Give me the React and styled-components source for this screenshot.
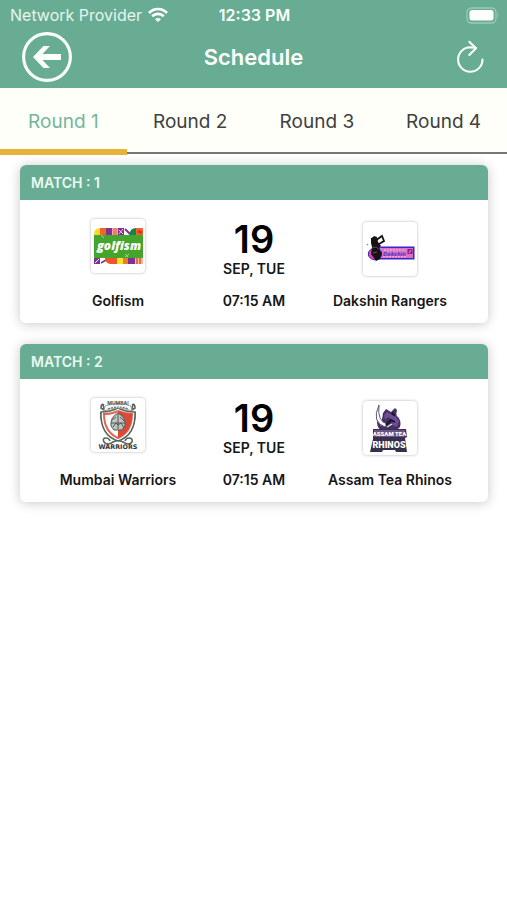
import React, { useState } from "react";
import styled, { createGlobalStyle } from "styled-components";

const green = "#68ad93";

const GlobalStyle = createGlobalStyle`
  * { box-sizing: border-box; }
  body {
    margin: 0;
    background: #fff;
    color: #161616;
    font-family: Inter, "Liberation Sans", sans-serif;
  }
  button { font: inherit; border: 0; padding: 0; background: none; cursor: pointer; }
`;

const Page = styled.div`
  min-height: 100vh;
  background: #fff;
`;

const Header = styled.header`
  background: ${green};
  color: #fbfffc;
`;

const StatusBar = styled.div`
  display: grid;
  grid-template-columns: 1fr auto 1fr;
  align-items: center;
  height: 30px;
  padding: 0 8px 0 10px;
  font-size: 16px;
  line-height: 20px;
  white-space: nowrap;
`;

const Carrier = styled.div`
  display: flex;
  align-items: center;
  gap: 6px;
  color: #e6f5ed;
`;

const Clock = styled.time`
  font-weight: 600;
`;

const BatterySlot = styled.div`
  display: flex;
  justify-content: flex-end;
`;

const TitleBar = styled.div`
  display: grid;
  grid-template-columns: 1fr auto 1fr;
  align-items: center;
  height: 58px;
  padding: 0 22px 4px;
`;

const Title = styled.h1`
  margin: 0;
  font-size: 22px;
  line-height: 28px;
  font-weight: 600;
`;

const IconButton = styled.button`
  display: flex;
  color: inherit;
  justify-self: ${(p) => p.$side};
`;

const Icon = styled.svg`
  display: block;
  flex: none;
`;

const Tabs = styled.div`
  display: grid;
  grid-template-columns: repeat(4, 1fr);
  background: #fdfff8;
`;

const Tab = styled.button`
  height: 67px;
  font-size: 19px;
  line-height: 24px;
  color: ${(p) => (p.$active ? "#74b69c" : "#404040")};
  box-shadow: ${(p) => (p.$active ? "inset 0 -6px #e8b437" : "inset 0 -1px #fff, inset 0 -3px #777")};
`;

const MatchList = styled.main`
  display: grid;
  gap: 21px;
  padding: 10px 19px 24px 20px;
`;

const Card = styled.article`
  overflow: hidden;
  border-radius: 6px;
  background: #fff;
  box-shadow: 0 1px 12px rgba(0, 0, 0, 0.22);
`;

const CardHeading = styled.h2`
  margin: 0;
  padding: 8px 11px 7px;
  background: ${green};
  color: #eafaf2;
  font-size: 14px;
  line-height: 20px;
  font-weight: 600;
`;

const CardBody = styled.div`
  display: grid;
  grid-template-columns: repeat(3, 1fr);
  align-items: end;
  padding: 19px 30px 12px;
`;

const Team = styled.div`
  display: flex;
  flex-direction: column;
  align-items: center;
  gap: ${(p) => (p.$away ? "15px" : "18px")};
`;

const LogoTile = styled.div`
  width: 54px;
  height: 54px;
  overflow: hidden;
  border-radius: 4px;
  background: #fff;
  box-shadow: 0 0 3px rgba(0, 0, 0, 0.3);
`;

const Label = styled.div`
  font-size: 14px;
  line-height: 20px;
  font-weight: 600;
  white-space: nowrap;
`;

const When = styled.time`
  display: flex;
  flex-direction: column;
  align-items: center;
`;

const Day = styled.div`
  font-size: 38px;
  line-height: 40px;
  font-weight: 600;
  color: #000;
`;

const DateLabel = styled(Label)`
  margin-bottom: 12px;
`;

function WifiIcon() {
  return (
    <Icon width="20" height="16" viewBox="0 0 20 16" fill="none" stroke="#fff" strokeWidth="2.6" aria-label="Wi-Fi">
      <path d="M1 6 C6 .7 14 .7 19 6" />
      <path d="M4.2 9.3 C7.6 6 12.4 6 15.8 9.3" />
      <path d="M10 15 L7 12.2 C8.7 10.6 11.3 10.6 13 12.2Z" fill="#fff" stroke="none" />
    </Icon>
  );
}

function BatteryIcon() {
  return (
    <Icon width="33" height="17" viewBox="0 0 33 17" aria-label="Battery full">
      <rect x="1" y="1" width="29" height="15" rx="4.5" fill="none" stroke="#9bcab6" strokeWidth="1.3" />
      <rect x="3.5" y="3" width="24" height="10.5" rx="2.5" fill="#fff" />
      <path d="M31.4 6 Q33.2 8.5 31.4 11Z" fill="#9bcab6" />
    </Icon>
  );
}

function BackIcon() {
  return (
    <Icon width="50" height="50" viewBox="0 0 50 50">
      <circle cx="25" cy="25" r="23.4" fill="none" stroke="currentColor" strokeWidth="3.1" />
      <path d="M11 25 L21.5 14 H28 L20.5 22 H39 V28 H20.5 L28 36 H21.5Z" fill="currentColor" />
    </Icon>
  );
}

function RefreshIcon() {
  return (
    <Icon width="29" height="34" viewBox="0 0 29 34" fill="none" stroke="currentColor" strokeWidth="2.1" strokeLinecap="round" strokeLinejoin="round">
      <path d="M26.5 19.5 A12.2 12.2 0 1 1 14.3 7.3 L20 8" />
      <path d="M13.3 1.8 L20 8.3 L13.3 15" />
    </Icon>
  );
}

function GolfismLogo() {
  return (
    <Icon width="54" height="54" viewBox="0 0 54 54" role="img" aria-label="Golfism logo">
      <rect x="3" y="15" width="49" height="25" fill="#43a52c" />
      <path d="M3 16 Q3 9 9 9 V16Z" fill="#f6dc28" />
      <path d="M9 9h6v7H9zM45 9h7v7h-7z" fill="#f0652c" />
      <path d="M15 9h6v7h-6zM27 9h6v7h-6z" fill="#7c3490" />
      <path d="M21 9h6v7h-6z" fill="#f4a9a0" />
      <path d="M23 9v7M25 9v7" stroke="#e0584b" />
      <path d="M28 15l4-5M28 11l4 4" stroke="#f3c4e4" />
      <path d="M33 9h6v7h-6z" fill="#fff" />
      <path d="M34 10l5 5" stroke="#7c3490" strokeWidth="2" />
      <path d="M38 16 Q39 9 45 9 V16Z" fill="#168442" />
      <path d="M47 12l4 2" stroke="#d83331" strokeWidth="3" />
      <g transform="translate(0 8)">
        <path d="M3 31h6v6H3z" fill="#79358f" />
        <path d="M4 36l4-4" stroke="#fff" />
        <path d="M9 31h7v6H9z" fill="#fff" />
        <path d="M10 36l5-3" stroke="#7c3490" strokeWidth="1.5" />
        <path d="M14 31h12v6h-7Q14 36 14 31" fill="#ed5728" />
        <path d="M26 31h7v6h-7z" fill="#f8df31" />
        <path d="M32 31h5v6h-5z" fill="#f17b26" />
        <path d="M37 31h7v6h-7z" fill="#7c3490" />
        <path d="M44 31h8v6h-8z" fill="#f5b9a0" />
        <path d="M46 31v6M49 31v6" stroke="#e15335" strokeWidth="1.5" />
      </g>
      <path d="M10 16l3 3M34 38l4-3M34 35l3 3" stroke="#a4d590" />
      <text x="28" y="31" textAnchor="middle" fill="#fff" fontFamily="Open Sans, sans-serif" fontSize="12" fontWeight="800" fontStyle="italic">golfism</text>
    </Icon>
  );
}

function DakshinLogo() {
  return (
    <Icon width="54" height="54" viewBox="0 0 54 54" role="img" aria-label="Dakshin Rangers logo">
      <rect x="13" y="24.5" width="38.5" height="13" fill="#3a27ca" />
      <rect x="17" y="26" width="33" height="10" fill="#d673c7" />
      <ellipse cx="12" cy="32" rx="6.7" ry="5.8" fill="#e8459e" stroke="#3425ca" />
      <path d="M21 28h22M20 34.5h24" stroke="#f2a3d5" strokeWidth="1.4" strokeDasharray="2 1" />
      <rect x="44.5" y="27" width="5" height="5" fill="#94208f" />
      <path d="M46 31l2-3" stroke="#e79acb" />
      <text x="31.5" y="33.5" textAnchor="middle" fill="#5731bb" fontFamily="Open Sans, sans-serif" fontSize="6" fontWeight="700" fontStyle="italic">Dakshin</text>
      <path d="M8 17l3-3 3 1 1 5 3 4-3 2 4 5-2 6-4 2-5-7 1-7-1-4z" fill="#161216" />
      <path d="M12 19l7-5 2 5-5 3M8 17l3-1" fill="none" stroke="#161216" strokeWidth="1.8" />
      <path d="M9 26l4-1 2 2M10 31l4-1" stroke="#77606d" strokeWidth=".8" />
      <circle cx="4.5" cy="22.5" r=".8" fill="#887385" />
    </Icon>
  );
}

function MumbaiLogo() {
  return (
    <Icon width="54" height="54" viewBox="0 0 54 54" role="img" aria-label="Mumbai Warriors logo">
      <path d="M12 7l2 6M10 14q-1 22 22 30 6 4 9 0 1-4-3-4-3 0-4 3M13 7q-3-2-3 3l3 2" fill="none" stroke="#59645f" strokeWidth="1.6" />
      <path d="M42 7l-2 6M44 14q1 22-22 30-6 4-9 0-2-4 2-4 3 0 4 3M41 7q3-2 3 3l-3 2" fill="none" stroke="#59645f" strokeWidth="1.6" />
      <path d="M27 10q8 4 17 4 1 23-17 29Q9 37 10 14q9 0 17-4" fill="#fff" stroke="#55635d" strokeWidth="1.5" />
      <path d="M27 13q7 3 14 3 0 18-14 24Q13 34 13 16q8 0 14-3" fill="#fff" stroke="#df6651" strokeWidth="2" />
      <path d="M27 13q7 3 14 3 0 18-14 24z" fill="#da4a38" />
      <path d="M20 28q-1-9 7-13 8 4 7 13l-3 4h-8z" fill="#bfc5c1" stroke="#4f5954" />
      <path d="M20 25h14M27 16v15M22 29l3-4 2 2 3-2 3 5M21 22l4-3M29 19l4 4" fill="none" stroke="#505a55" strokeWidth="1" />
      <path d="M13 13Q27 7 41 13l-1-5Q27 3 14 8z" fill="#f6f7f6" stroke="#8c9390" strokeWidth=".8" />
      <path d="M17 11q10-4 20 0" fill="none" stroke="#68736d" strokeWidth="1.2" strokeDasharray="2 1" />
      <text x="27" y="7" textAnchor="middle" fill="#4d5852" fontFamily="Inter, sans-serif" fontSize="5" fontWeight="700">MUMBAI</text>
      <text x="27" y="51" textAnchor="middle" fill="#303633" fontFamily="DejaVu Sans, sans-serif" fontSize="6.4" fontWeight="700">WARRIORS</text>
    </Icon>
  );
}

function RhinosLogo() {
  return (
    <Icon width="54" height="54" viewBox="0 0 54 54" role="img" aria-label="Assam Tea Rhinos logo">
      <path d="M20 12l3-4 5 3 4-4 2 2-1 5q6 5 4 12l-4 4H18q-5-5-4-12l4 7z" fill="#413060" />
      <path d="M21 14l3-3 5 3 5-1-1 3 3 4-2 6-5-2 1-5-5-3-3 3z" fill="#6e4d97" />
      <path d="M16 4q-8 17 6 22l2-3q-10-3-8-19" fill="#f8f6f9" stroke="#574862" strokeWidth=".9" />
      <path d="M23 24l5-5 4 2M29 12l3 3" fill="none" stroke="#181320" strokeWidth="1.8" />
      <path d="M24 26l5-3" stroke="#ede8f4" strokeWidth="1.4" />
      <path d="M10 28h33l1 8-2 1 2 14H33l-1-2H20l-1 2H7l3-13z" fill="#37304b" />
      <path d="M11 29h31v7H11z" fill="#6b5484" />
      <text x="26.5" y="35" textAnchor="middle" fill="#fff" fontFamily="Roboto, sans-serif" fontSize="6" fontWeight="900">ASSAM TEA</text>
      <text x="26" y="47" textAnchor="middle" fill="#fff" fontFamily="Roboto, sans-serif" fontSize="9" fontWeight="900">RHINOS</text>
    </Icon>
  );
}

const rounds = ["Round 1", "Round 2", "Round 3", "Round 4"];

const matches = [
  { id: 1, home: ["Golfism", GolfismLogo], away: ["Dakshin Rangers", DakshinLogo] },
  { id: 2, home: ["Mumbai Warriors", MumbaiLogo], away: ["Assam Tea Rhinos", RhinosLogo] },
];

function TeamEntry({ team: [name, Logo], away }) {
  return (
    <Team $away={away}>
      <LogoTile><Logo /></LogoTile>
      <Label>{name}</Label>
    </Team>
  );
}

export default function App() {
  const [round, setRound] = useState(0);
  return (
    <Page>
      <GlobalStyle />
      <Header>
        <StatusBar>
          <Carrier>Network Provider <WifiIcon /></Carrier>
          <Clock>12:33 PM</Clock>
          <BatterySlot><BatteryIcon /></BatterySlot>
        </StatusBar>
        <TitleBar>
          <IconButton $side="start" aria-label="Back"><BackIcon /></IconButton>
          <Title>Schedule</Title>
          <IconButton $side="end" aria-label="Refresh"><RefreshIcon /></IconButton>
        </TitleBar>
      </Header>
      <Tabs role="tablist">
        {rounds.map((name, i) => (
          <Tab key={name} role="tab" aria-selected={i === round} $active={i === round} onClick={() => setRound(i)}>
            {name}
          </Tab>
        ))}
      </Tabs>
      <MatchList>
        {matches.map((m) => (
          <Card key={m.id}>
            <CardHeading>MATCH : {m.id}</CardHeading>
            <CardBody>
              <TeamEntry team={m.home} />
              <When>
                <Day>19</Day>
                <DateLabel>SEP, TUE</DateLabel>
                <Label>07:15 AM</Label>
              </When>
              <TeamEntry team={m.away} away />
            </CardBody>
          </Card>
        ))}
      </MatchList>
    </Page>
  );
}
